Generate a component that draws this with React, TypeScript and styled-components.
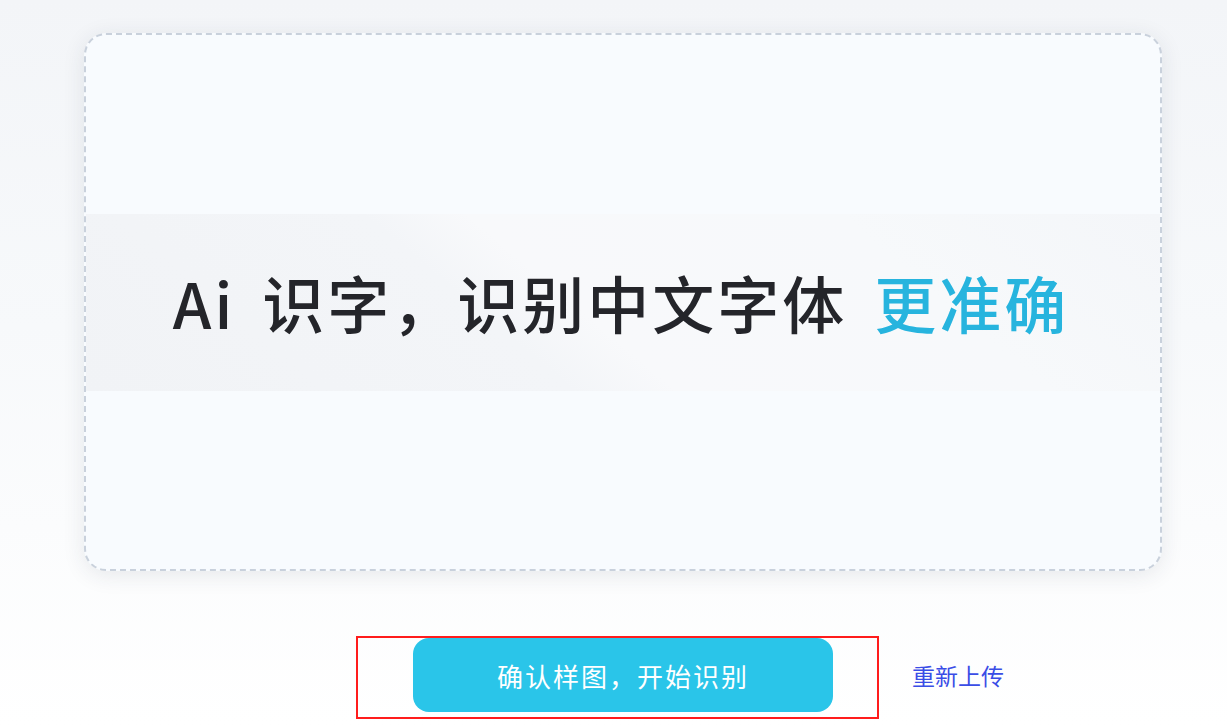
import React from 'react';
import styled, { createGlobalStyle } from 'styled-components';

const GlobalStyle = createGlobalStyle`
  html, body {
    margin: 0;
    padding: 0;
  }
  body {
    font-family: "Noto Sans CJK SC", "Noto Sans", sans-serif;
    background: #fff;
  }
`;

const Page = styled.div`
  width: 1227px;
  height: 726px;
  overflow: hidden;
  box-sizing: border-box;
  padding: 33px 0 0 84px;
  background: linear-gradient(180deg, #f3f5f8 0%, #f7f9fb 45%, #ffffff 100%);
`;

const Column = styled.div`
  width: 1078px;
  display: flex;
  flex-direction: column;
  gap: 67px;
`;

const PreviewCard = styled.div`
  height: 538px;
  box-sizing: border-box;
  border: 2px dashed #c9d1dc;
  border-radius: 22px;
  background: #f8fbfe;
  box-shadow: 0 4px 22px rgba(40, 50, 70, 0.1);
  display: flex;
  align-items: center;
  overflow: hidden;
`;

const SampleBand = styled.div`
  width: 100%;
  height: 177px;
  display: flex;
  align-items: center;
  justify-content: center;
  background: linear-gradient(40deg, #f1f3f6 0%, #f3f5f8 38%, #f8f9fb 46%, #f7f9fb 75%, #f4f6f9 100%);
`;

const Headline = styled.h1`
  margin: 0 0 0 -4px;
  font-family: "Noto Sans CJK SC", "Noto Sans", sans-serif;
  font-size: 62px;
  font-weight: 500;
  letter-spacing: 3px;
  word-spacing: 10px;
  line-height: 1;
  color: #24252a;
  white-space: nowrap;
`;

const Accent = styled.span`
  color: #27b4de;
`;

const ActionRow = styled.div`
  display: grid;
  grid-template-columns: 1fr auto 1fr;
  align-items: center;
`;

const ButtonSlot = styled.div`
  position: relative;
  grid-column: 2;
`;

const Highlight = styled.div`
  position: absolute;
  left: -57px;
  right: -46px;
  top: -2px;
  bottom: -7px;
  border: 2px solid #ff1c1c;
  pointer-events: none;
`;

const PrimaryButton = styled.button`
  display: block;
  width: 420px;
  height: 74px;
  border: none;
  border-radius: 16px;
  background: #2ac5e9;
  color: #ffffff;
  font-family: "Noto Sans CJK SC", "Noto Sans", sans-serif;
  font-size: 26px;
  font-weight: 400;
  letter-spacing: 2px;
  cursor: pointer;
`;

const TextLink = styled.a`
  justify-self: start;
  margin-left: 79px;
  font-size: 23px;
  color: #3a4de6;
  text-decoration: none;
  cursor: pointer;
  white-space: nowrap;
`;

export default function App() {
  return (
    <>
      <GlobalStyle />
      <Page>
        <Column>
          <PreviewCard>
            <SampleBand>
              <Headline>
                Ai 识字，识别中文字体 <Accent>更准确</Accent>
              </Headline>
            </SampleBand>
          </PreviewCard>
          <ActionRow>
            <ButtonSlot>
              <PrimaryButton>确认样图，开始识别</PrimaryButton>
              <Highlight />
            </ButtonSlot>
            <TextLink>重新上传</TextLink>
          </ActionRow>
        </Column>
      </Page>
    </>
  );
}
